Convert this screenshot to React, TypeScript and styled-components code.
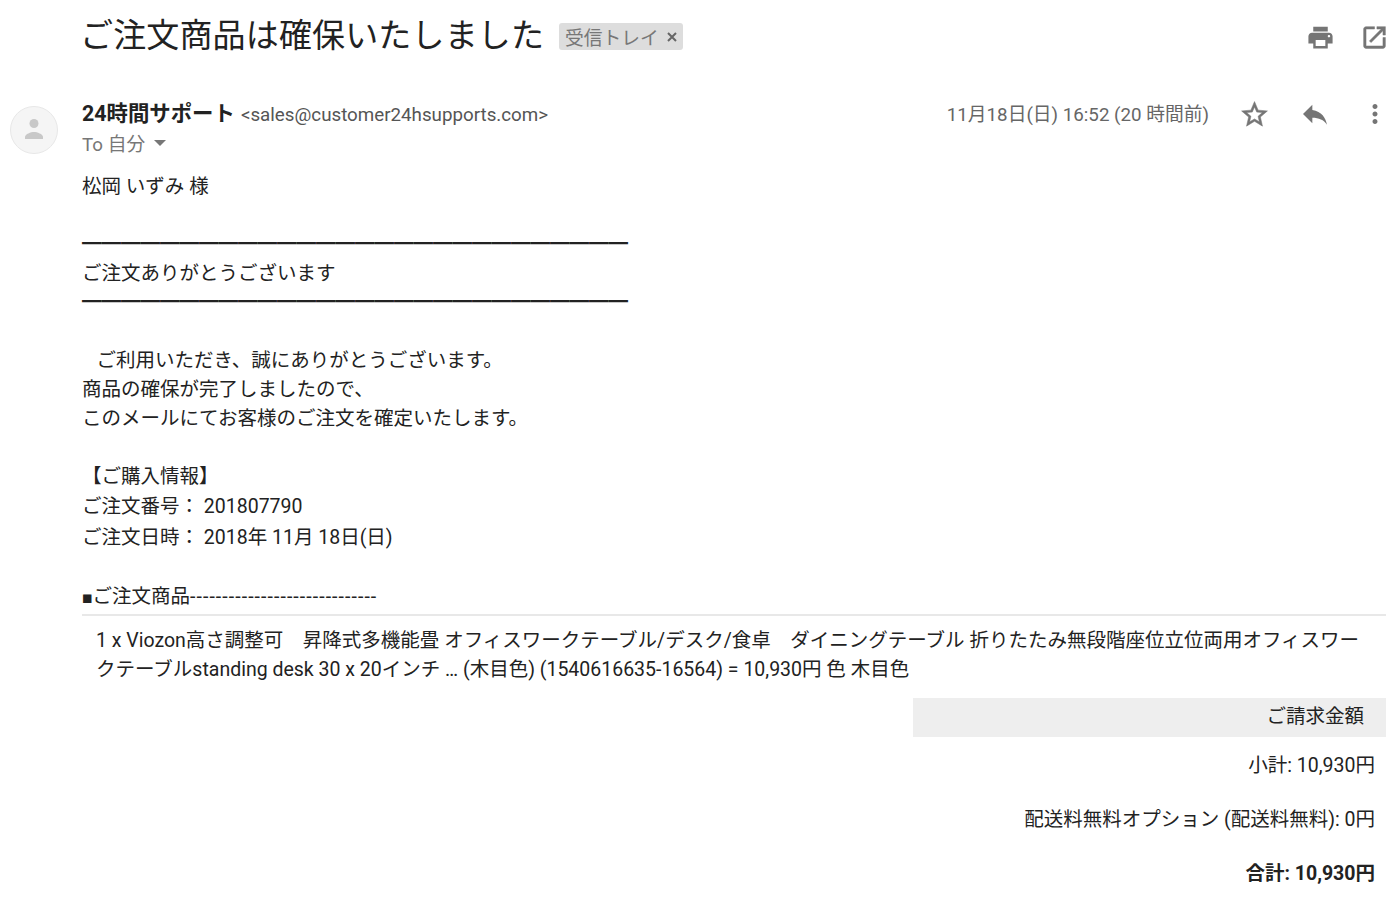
import React from "react";
import styled, { createGlobalStyle } from "styled-components";

const GlobalStyle = createGlobalStyle`
  html, body {
    margin: 0;
    padding: 0;
    background: #fff;
    overflow: hidden;
  }
  body {
    font-family: Roboto, "Noto Sans CJK JP", sans-serif;
    color: #222;
  }
`;

const Page = styled.div`
  width: 1391px;
  height: 917px;
  overflow: hidden;
`;

const SubjectRow = styled.div`
  display: flex;
  align-items: center;
  height: 72px;
  padding: 0 2px 0 82px;
`;

const Subject = styled.h2`
  margin: 0 0 0 -2px;
  font-size: 33px;
  font-weight: 400;
  line-height: 72px;
  letter-spacing: 0.15px;
  color: #222;
  white-space: nowrap;
`;

const Chip = styled.div`
  display: flex;
  align-items: center;
  gap: 8px;
  height: 27px;
  margin: 1px 0 0 15px;
  padding: 0 6px;
  background: #ddd;
  border-radius: 3px;
  font-size: 18.75px;
  color: #777;
  white-space: nowrap;
`;

const ToolIcons = styled.div`
  display: flex;
  align-items: center;
  gap: 25px;
  margin-left: auto;
  padding-top: 2px;
`;

const MessageHead = styled.div`
  display: flex;
  height: 73px;
  padding: 27px 0 0 10px;
  box-sizing: border-box;
`;

const Avatar = styled.div`
  display: flex;
  align-items: center;
  justify-content: center;
  flex: none;
  width: 48px;
  height: 48px;
  margin-top: 7px;
  border: 1px solid #e8e8e8;
  border-radius: 50%;
  background: #f5f5f5;
  box-sizing: border-box;
`;

const Sender = styled.div`
  margin-left: 24px;
`;

const SenderLine = styled.div`
  display: flex;
  align-items: baseline;
  height: 30px;
  line-height: 30px;
  white-space: nowrap;
`;

const SenderName = styled.span`
  font-size: 21.4px;
  font-weight: 700;
  color: #222;
`;

const SenderMail = styled.span`
  margin-left: 6px;
  font-size: 18.75px;
  color: #555;
`;

const Recipient = styled.div`
  display: flex;
  align-items: center;
  gap: 9px;
  height: 26px;
  font-size: 18.75px;
  color: #777;
`;

const Caret = styled.span`
  width: 0;
  height: 0;
  margin-top: 2px;
  border-left: 6px solid transparent;
  border-right: 6px solid transparent;
  border-top: 6px solid #777;
`;

const MetaBlock = styled.div`
  display: flex;
  align-items: center;
  height: 30px;
  margin-left: auto;
  padding-right: 1px;
`;

const DateText = styled.span`
  margin: 0 30px 4px 0;
  font-size: 18.75px;
  color: #666;
  white-space: nowrap;
`;

const MetaIcons = styled.div`
  display: flex;
  align-items: center;
  gap: 29px;
`;

const Body = styled.div`
  padding: 0 5px 0 82px;
  font-size: 19.5px;
  color: #222;
`;

const Line = styled.div<{ $h?: number }>`
  height: ${(p) => p.$h ?? 29}px;
  line-height: ${(p) => p.$h ?? 29}px;
  white-space: nowrap;
`;

const Gap = styled.div<{ $h: number }>`
  height: ${(p) => p.$h}px;
`;

const Bullet = styled.span`
  font-size: 10.5px;
`;

const Dashes = styled.span`
  letter-spacing: 1.07px;
`;

const ItemTable = styled.div`
  margin-top: 3px;
  padding: 10px 14px 0;
  border-top: 2px solid #e8e8e8;
  line-height: 29px;
`;

const Totals = styled.div`
  margin-top: 14px;
  text-align: right;
`;

const TotalsHead = styled.div`
  height: 39px;
  margin: 0 0 2px 831px;
  padding-right: 22px;
  background: #eee;
  line-height: 37px;
`;

const TotalRow = styled.div<{ $bold?: boolean }>`
  height: 54px;
  padding-right: 11px;
  line-height: 54px;
  font-weight: ${(p) => (p.$bold ? 700 : 400)};
`;

const Icon = styled.svg<{ $size: number }>`
  display: block;
  width: ${(p) => p.$size}px;
  height: ${(p) => p.$size}px;
  fill: #757575;
`;

const CloseIcon = () => (
  <svg width="10" height="10" viewBox="0 0 10 10">
    <path d="M1 1l8 8M9 1l-8 8" stroke="#666" strokeWidth="2" />
  </svg>
);

const App = () => (
  <Page>
    <GlobalStyle />
    <SubjectRow>
      <Subject>ご注文商品は確保いたしました</Subject>
      <Chip>
        受信トレイ
        <CloseIcon />
      </Chip>
      <ToolIcons>
        <Icon $size={29} viewBox="0 0 24 24">
          <path d="M19 8H5c-1.66 0-3 1.34-3 3v6h4v4h12v-4h4v-6c0-1.66-1.34-3-3-3zm-3 11H8v-5h8v5zm3-7c-.55 0-1-.45-1-1s.45-1 1-1 1 .45 1 1-.45 1-1 1zm-1-9H6v4h12V3z" />
        </Icon>
        <Icon $size={29} viewBox="0 0 24 24" stroke="#757575" strokeWidth=".4">
          <path d="M19 19H5V5h7V3H5c-1.110 0-2 .9-2 2v14c0 1.100.89 2 2 2h14c1.100 0 2-.9 2-2v-7h-2v7zM14 3v2h3.590l-9.830 9.830 1.410 1.410L19 6.410V10h2V3h-7z" />
        </Icon>
      </ToolIcons>
    </SubjectRow>

    <MessageHead>
      <Avatar>
        <svg width="24" height="24" viewBox="0 0 24 24" fill="#c8c8c8">
          <circle cx="12" cy="5.500" r="4.500" />
          <path d="M3 21v-2c0-3 6-5 9-5s9 2 9 5v2z" />
        </svg>
      </Avatar>
      <Sender>
        <SenderLine>
          <SenderName>24時間サポート</SenderName>
          <SenderMail>&lt;sales@customer24hsupports.com&gt;</SenderMail>
        </SenderLine>
        <Recipient>
          To 自分
          <Caret />
        </Recipient>
      </Sender>
      <MetaBlock>
        <DateText>11月18日(日) 16:52 (20 時間前)</DateText>
        <MetaIcons>
          <Icon $size={31} viewBox="0 0 24 24" stroke="#757575" strokeWidth=".4">
            <path d="M22 9.240l-7.190-.62L12 2 9.190 8.630 2 9.240l5.460 4.730L5.820 21 12 17.270 18.180 21l-1.630-7.030L22 9.240zM12 15.400l-3.760 2.270 1-4.280-3.320-2.880 4.380-.38L12 6.100l1.710 4.040 4.380.38-3.320 2.880 1 4.280L12 15.400z" />
          </Icon>
          <Icon $size={32} viewBox="0 0 24 24">
            <path d="M10 9V5l-7 7 7 7v-4.100c5 0 8.500 1.600 11 5.100-1-5-4-10-11-11z" />
          </Icon>
          <Icon $size={30} viewBox="0 0 24 24">
            <path d="M12 8c1.100 0 2-.9 2-2s-.9-2-2-2-2 .9-2 2 .9 2 2 2zm0 2c-1.100 0-2 .9-2 2s.9 2 2 2 2-.9 2-2-.9-2-2-2zm0 6c-1.100 0-2 .9-2 2s.9 2 2 2 2-.9 2-2-.9-2-2-2z" />
          </Icon>
        </MetaIcons>
      </MetaBlock>
    </MessageHead>

    <Body>
      <Gap $h={27} />
      <Line>松岡 いずみ 様</Line>
      <Gap $h={29} />
      <Line>━━━━━━━━━━━━━━━━━━━━━━━━━━━━</Line>
      <Line>ご注文ありがとうございます</Line>
      <Line>━━━━━━━━━━━━━━━━━━━━━━━━━━━━</Line>
      <Gap $h={29} />
      <Line>{"\u00a0\u00a0\u00a0"}ご利用いただき、誠にありがとうございます。</Line>
      <Line>商品の確保が完了しましたので、</Line>
      <Line>このメールにてお客様のご注文を確定いたします。</Line>
      <Gap $h={29} />
      <Line>【ご購入情報】</Line>
      <Line $h={31}>ご注文番号： 201807790</Line>
      <Line $h={31}>ご注文日時： 2018年 11月 18日(日)</Line>
      <Gap $h={29} />
      <Line>
        <Bullet>■</Bullet>ご注文商品<Dashes>-----------------------------</Dashes>
      </Line>
      <ItemTable>
        1 x Viozon高さ調整可　昇降式多機能畳 オフィスワークテーブル/デスク/食卓　ダイニングテーブル 折りたたみ無段階座位立位両用オフィスワークテーブルstanding desk 30 x 20インチ … (木目色) (1540616635-16564) = 10,930円 色 木目色
      </ItemTable>
      <Totals>
        <TotalsHead>ご請求金額</TotalsHead>
        <TotalRow>小計: 10,930円</TotalRow>
        <TotalRow>配送料無料オプション (配送料無料): 0円</TotalRow>
        <TotalRow $bold>合計: 10,930円</TotalRow>
      </Totals>
    </Body>
  </Page>
);

export default App;
